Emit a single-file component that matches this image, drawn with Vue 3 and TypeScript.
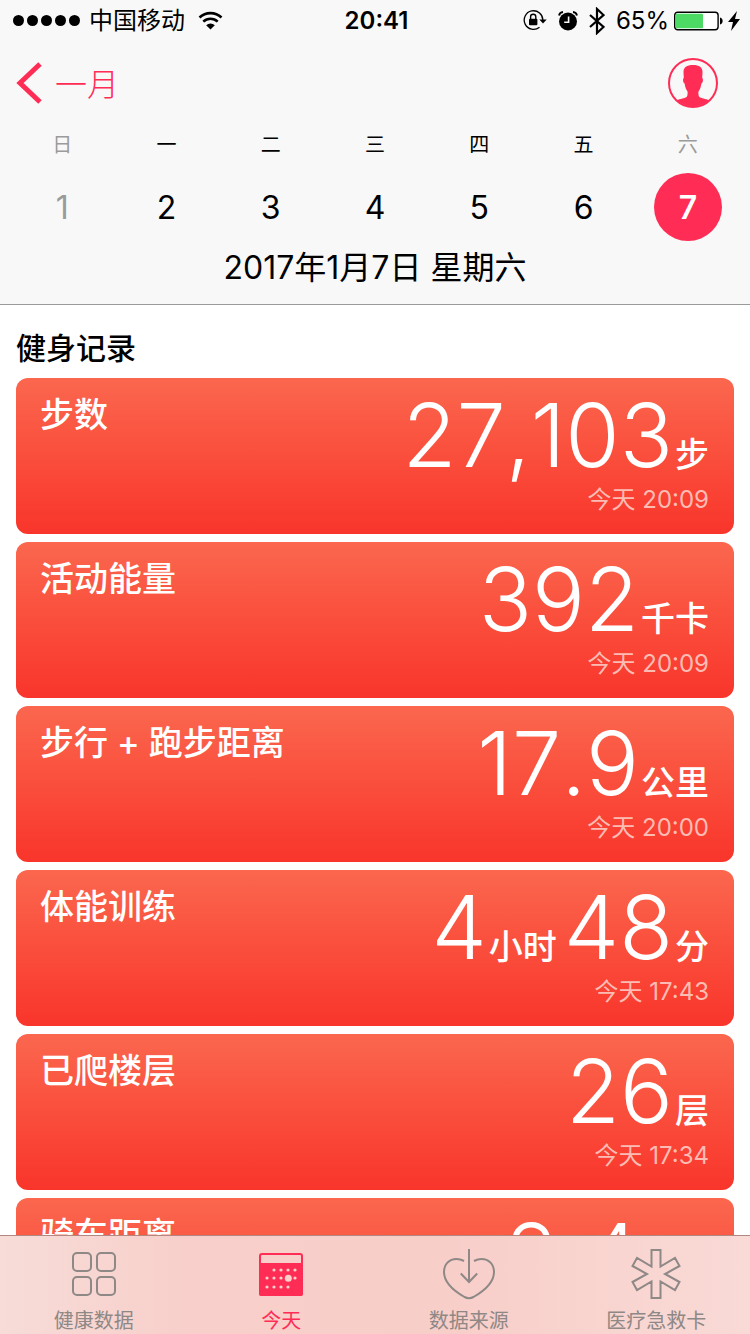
<script setup lang="ts">
import { ref } from 'vue'

interface Part { value: string; unit: string }
interface Metric { title: string; parts: Part[]; time: string }
interface Day { name: string; num: number }

const days: Day[] = ['日', '一', '二', '三', '四', '五', '六'].map((name, i) => ({ name, num: i + 1 }))
const selected = ref(7)

const metrics: Metric[] = [
  { title: '步数', parts: [{ value: '27,103', unit: '步' }], time: '20:09' },
  { title: '活动能量', parts: [{ value: '392', unit: '千卡' }], time: '20:09' },
  { title: '步行 + 跑步距离', parts: [{ value: '17.9', unit: '公里' }], time: '20:00' },
  { title: '体能训练', parts: [{ value: '4', unit: '小时' }, { value: '48', unit: '分' }], time: '17:43' },
  { title: '已爬楼层', parts: [{ value: '26', unit: '层' }], time: '17:34' },
  { title: '骑车距离', parts: [{ value: '2.4', unit: '公里' }], time: '' },
]

const tabs = [
  { id: 'data', label: '健康数据' },
  { id: 'today', label: '今天' },
  { id: 'sources', label: '数据来源' },
  { id: 'medical', label: '医疗急救卡' },
]
const activeTab = ref('today')

const calendarDots: [number, number][] = [
  [19, 22], [26, 22], [33, 22], [40, 22],
  [12, 30], [19, 30], [26, 30], [40, 30],
  [12, 39], [19, 39], [26, 39], [33, 39],
]
</script>

<template>
  <div class="screen">
    <header class="top">
      <div class="status">
        <div class="status-left">
          <span class="signal"><i v-for="n in 5" :key="n" class="dot"></i></span>
          <span class="carrier">中国移动</span>
          <svg class="wifi" width="25" height="20" viewBox="0 0 25 20" aria-hidden="true">
            <path d="M1.500 6.500a16 16 0 0 1 22 0M5.300 10.600a10.500 10.500 0 0 1 14.400 0" fill="none" stroke="#000" stroke-width="2.600" />
            <path d="M8.200 14.200a6.200 6.200 0 0 1 8.600 0L12.500 18.500z" />
          </svg>
        </div>
        <time class="clock">20:41</time>
        <div class="status-right">
          <svg width="24" height="24" viewBox="0 0 24 24" aria-hidden="true">
            <path d="M16.500 18.200A9.300 9.300 0 1 1 19.800 11.500" fill="none" stroke="#000" stroke-width="1.300" />
            <path d="M16.300 10.600h7.400l-3.700 4z" />
            <rect x="6" y="9.800" width="8.400" height="6.400" rx="1" />
            <path d="M7.600 10V7.800a2.600 2.600 0 0 1 5.200 0V10" fill="none" stroke="#000" stroke-width="1.400" />
          </svg>
          <svg width="20" height="24" viewBox="0 0 20 24" aria-hidden="true">
            <circle cx="10" cy="12.500" r="9" />
            <path d="M1 6.500a4.500 4.500 0 0 1 4-3.500M19 6.500a4.500 4.500 0 0 0-4-3.500" fill="none" stroke="#000" stroke-width="1.800" />
            <path d="M10.600 7.500v5.800H6.200" fill="none" stroke="#f8f8f8" stroke-width="1.600" />
          </svg>
          <svg width="16" height="28" viewBox="0 0 16 28" aria-hidden="true">
            <path d="M1 8l13.500 12-6.500 6V2l6.500 6L1 20" fill="none" stroke="#000" stroke-width="2.200" />
          </svg>
          <span class="power">
            <span class="percent">65%</span>
            <svg width="49" height="20" viewBox="0 0 49 20" aria-hidden="true">
              <rect x=".7" y="1.200" width="43.400" height="17.600" rx="3" fill="#fff" stroke="#000" stroke-width="1.400" />
              <rect x="2" y="2.800" width="27" height="14.400" rx="1" fill="#4cd964" />
              <path d="M46 6.500c3.500.6 3.500 6.400 0 7z" />
            </svg>
            <svg width="12" height="20" viewBox="0 0 12 20" aria-hidden="true">
              <path d="M9 0L0 11h5L3 20l9-12H7z" />
            </svg>
          </span>
        </div>
      </div>

      <nav class="nav">
        <button class="back" type="button">
          <svg width="26" height="42" viewBox="0 0 26 42" aria-hidden="true">
            <path d="M24 2L4 21l20 19" fill="none" stroke="#ff2d55" stroke-width="5" />
          </svg>
          <span class="back-label">一月</span>
        </button>
        <button class="profile" type="button" aria-label="个人资料">
          <svg width="50" height="50" viewBox="0 0 50 50" aria-hidden="true">
            <circle cx="25" cy="25" r="24" fill="none" stroke="#ff2d55" stroke-width="2" />
            <path fill="#ff2d55" d="M25 7c-6.500 0-9.700 2.400-9.500 7.500l.3 5.500c-1.300.6-.8 5 .8 5.600.5 3.600 1.500 6.200 3 8.200 0 2.200 0 3.400-.6 4.600-2 2-7 2.200-10 3.800A24 24 0 0 0 41 42.200c-3-1.600-8-1.800-10-3.800-.6-1.200-.6-2.400-.6-4.600 1.500-2 2.500-4.600 3-8.200 1.600-.6 2.100-5 .8-5.600l.3-5.500C34.700 9.400 31.500 7 25 7z" />
          </svg>
        </button>
      </nav>

      <div class="week">
        <button
          v-for="d in days" :key="d.num" type="button" class="day"
          :class="{ edge: d.num === 1 || d.num === 7, selected: d.num === selected }"
          @click="selected = d.num"
        >
          <span class="day-name">{{ d.name }}</span>
          <span class="day-num">{{ d.num }}</span>
        </button>
      </div>
      <p class="date">2017年1月{{ selected }}日 星期{{ days[selected - 1].name }}</p>
    </header>

    <main class="content">
      <h1 class="heading">健身记录</h1>
      <article v-for="m in metrics" :key="m.title" class="card">
        <h2 class="title">{{ m.title }}</h2>
        <div class="reading">
          <p class="amount">
            <span v-for="p in m.parts" :key="p.unit" class="part">
              <span class="value">{{ p.value }}</span><span class="unit">{{ p.unit }}</span>
            </span>
          </p>
          <p v-if="m.time" class="when">今天 {{ m.time }}</p>
        </div>
      </article>
    </main>

    <nav class="tabs">
      <button
        v-for="t in tabs" :key="t.id" type="button" class="tab"
        :class="{ active: t.id === activeTab }" @click="activeTab = t.id"
      >
        <svg width="52" height="52" viewBox="0 0 52 52" fill="none" stroke="currentColor" stroke-width="2" aria-hidden="true">
          <template v-if="t.id === 'data'">
            <rect x="5" y="5" width="18" height="18" rx="4" />
            <rect x="29" y="5" width="18" height="18" rx="4" />
            <rect x="5" y="29" width="18" height="18" rx="4" />
            <rect x="29" y="29" width="18" height="18" rx="4" />
          </template>
          <template v-else-if="t.id === 'today'">
            <rect x="5" y="6" width="42" height="41" rx="2" />
            <rect x="5" y="16" width="42" height="31" rx="1" fill="currentColor" />
            <g fill="#f9d0cb" stroke="none">
              <circle v-for="(c, i) in calendarDots" :key="i" :cx="c[0]" :cy="c[1]" r="1.600" />
              <circle cx="33.300" cy="30.300" r="3.500" />
            </g>
          </template>
          <template v-else-if="t.id === 'sources'">
            <path d="M26 1v33M17.800 25.500L26 34l8.200-8.500" />
            <path d="M21 13C18 11.400 16 11 13.500 11 6 11 1 16.500 1 24c0 11 10 19 20.500 25 3 1.600 6 1.600 9 0C41 43 51 35 51 24c0-7.500-5-13-12.500-13-2.500 0-4.500.4-7.500 2" />
          </template>
          <path v-else d="M21.500 2h9v16.500L45 10l4.500 8L35 26l14.500 8-4.500 8-14.500-8.500V50h-9V33.500L7 42l-4.500-8L17 26 2.500 18 7 10l14.500 8.500z" />
        </svg>
        <span class="tab-label">{{ t.label }}</span>
      </button>
    </nav>
  </div>
</template>

<style>
body { background: #fff; }
</style>

<style scoped>
.screen {
  height: 100vh;
  display: flex;
  flex-direction: column;
  font-family: Inter, "Noto Sans CJK SC", sans-serif;
  color: #000;
}
button {
  appearance: none;
  border: 0;
  padding: 0;
  background: none;
  font: inherit;
  color: inherit;
  cursor: pointer;
}
svg { display: block; flex: none; }
p, h1, h2 { margin: 0; }

.top {
  flex: none;
  background: #f8f8f8;
  border-bottom: 1px solid #9a9a9a;
}
.status {
  height: 40px;
  display: grid;
  grid-template-columns: 1fr auto 1fr;
  align-items: center;
  padding: 0 10px 0 13px;
  font-size: 24px;
  line-height: 40px;
}
.carrier, .clock, .percent { padding-top: 1px; }
.status-left, .status-right, .power, .signal {
  display: flex;
  align-items: center;
}
.signal { gap: 3px; margin-right: 9px; }
.dot { width: 11px; height: 11px; border-radius: 50%; background: #000; }
.wifi { margin-left: 13px; }
.clock { font-weight: 600; }
.status-right { justify-content: flex-end; gap: 11px; }
.power { gap: 5px; }

.nav {
  height: 86px;
  display: flex;
  align-items: center;
  justify-content: space-between;
  padding: 0 32px 0 16px;
}
.back {
  display: flex;
  align-items: center;
  gap: 13px;
  color: #ff2d55;
  font-size: 32px;
  font-weight: 300;
  line-height: 44px;
}
.back-label { padding-top: 4px; }
.profile { border-radius: 50%; }

.week {
  display: grid;
  grid-template-columns: repeat(7, 1fr);
  padding: 0 10px;
}
.day {
  display: flex;
  flex-direction: column;
  align-items: center;
}
.day-name { font-size: 20px; line-height: 38px; }
.day-num {
  margin-top: 9px;
  width: 68px;
  height: 68px;
  border-radius: 50%;
  font-size: 32px;
  line-height: 70px;
}
.edge { color: #9b9b9b; }
.selected .day-num { background: #ff2d55; color: #fff; font-weight: 600; }
.date {
  padding: 5px 0 14px;
  text-align: center;
  font-size: 32px;
  line-height: 44px;
}

.content {
  flex: 1;
  min-height: 0;
  overflow-y: auto;
  scrollbar-width: none;
  padding: 0 16px;
}
.heading {
  padding: 21px 0 8px;
  font-size: 30px;
  line-height: 44px;
  font-weight: 500;
}
.card {
  display: flex;
  justify-content: space-between;
  height: 156px;
  margin-bottom: 8px;
  padding: 0 25px 0 24px;
  border-radius: 12px;
  background: linear-gradient(#fb674e, #f9352b);
  color: #fff;
}
.title {
  padding-top: 13px;
  font-size: 34px;
  line-height: 48px;
  font-weight: 500;
}
.reading { text-align: right; }
.amount {
  display: flex;
  justify-content: flex-end;
  gap: 7px;
  height: 104px;
}
.part {
  display: flex;
  align-items: baseline;
  gap: 2px;
}
.value {
  font-size: 88px;
  line-height: 114px;
  font-weight: 300;
  font-kerning: none;
}
.unit { font-size: 34px; line-height: 48px; font-weight: 500; }
.when {
  font-size: 24px;
  line-height: 36px;
  color: #fdbcb3;
}

.tabs {
  flex: none;
  display: grid;
  grid-template-columns: repeat(4, 1fr);
  height: 98px;
  border-top: 1px solid #b28782;
  background: linear-gradient(90deg, #f7dcd8, #f8cfca 25%, #f8cec9 60%, #f9dad6);
}
.tab {
  display: flex;
  flex-direction: column;
  align-items: center;
  padding-top: 12px;
  color: #8e8886;
}
.tab.active { color: #ff2d55; }
.tab-label { margin-top: 6px; font-size: 20px; line-height: 30px; }
</style>
